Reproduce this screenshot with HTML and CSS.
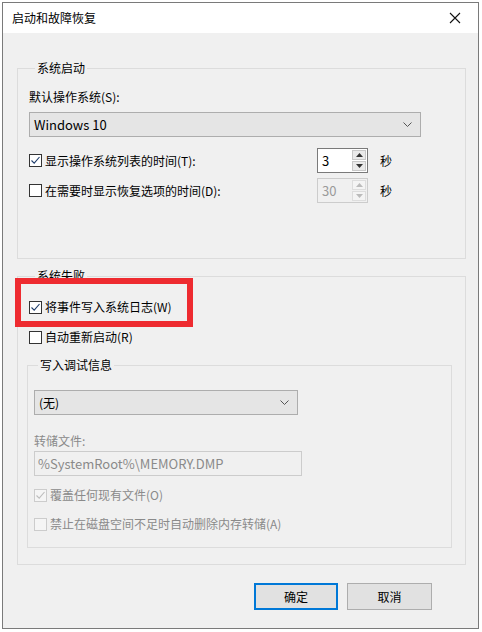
FILE: index.html
```html
<!DOCTYPE html>
<html lang="zh-CN">
<head>
<meta charset="utf-8">
<link rel="stylesheet" href="styles.css">
</head>
<body>
<div class="window">
  <div class="titlebar">
    <span class="title">启动和故障恢复</span>
    <svg class="close" width="12" height="12" viewBox="0 0 12 12"><path d="M1 1 L11 11 M11 1 L1 11" stroke="#111" stroke-width="1.1" fill="none"/></svg>
  </div>
  <div class="content">
    <fieldset class="group g1">
      <legend>系统启动</legend>
      <div class="label">默认操作系统(S):</div>
      <div class="select wide"><span>Windows 10</span>
        <svg width="9" height="5" viewBox="0 0 9 5"><path d="M0.5 0.5 L4.5 4.5 L8.5 0.5" stroke="#555" fill="none"/></svg>
      </div>
      <div class="srow r1">
        <div class="check"><span class="box"><svg width="11" height="11" viewBox="0 0 11 11"><path d="M1.5 5.5 L4.2 8.2 L9.5 2" stroke="#1f3d6b" stroke-width="1.1" fill="none"/></svg></span>显示操作系统列表的时间(T):</div>
        <div class="spin"><span class="val">3</span><span class="btns"><span class="sb"><svg width="7" height="4" viewBox="0 0 7 4"><path d="M0 4 L3.5 0 L7 4Z" fill="#333"/></svg></span><span class="sb"><svg width="7" height="4" viewBox="0 0 7 4"><path d="M0 0 L3.5 4 L7 0Z" fill="#333"/></svg></span></span></div>
        <span class="unit">秒</span>
      </div>
      <div class="srow r2">
        <div class="check"><span class="box"></span>在需要时显示恢复选项的时间(D):</div>
        <div class="spin dis"><span class="val">30</span><span class="btns"><span class="sb"><svg width="7" height="4" viewBox="0 0 7 4"><path d="M0 4 L3.5 0 L7 4Z" fill="#bbb"/></svg></span><span class="sb"><svg width="7" height="4" viewBox="0 0 7 4"><path d="M0 0 L3.5 4 L7 0Z" fill="#bbb"/></svg></span></span></div>
        <span class="unit">秒</span>
      </div>
    </fieldset>

    <fieldset class="group g2">
      <legend>系统失败</legend>
      <div class="check crow c1"><span class="box"><svg width="11" height="11" viewBox="0 0 11 11"><path d="M1.5 5.5 L4.2 8.2 L9.5 2" stroke="#1f3d6b" stroke-width="1.1" fill="none"/></svg></span>将事件写入系统日志(W)</div>
      <div class="check crow c2"><span class="box"></span>自动重新启动(R)</div>
      <fieldset class="group g3">
        <legend>写入调试信息</legend>
        <div class="select narrow"><span>(无)</span>
          <svg width="9" height="5" viewBox="0 0 9 5"><path d="M0.5 0.5 L4.5 4.5 L8.5 0.5" stroke="#555" fill="none"/></svg>
        </div>
        <div class="label dim dumplabel">转储文件:</div>
        <div class="textbox">%SystemRoot%\MEMORY.DMP</div>
        <div class="check crow dis c3"><span class="box"><svg width="11" height="11" viewBox="0 0 11 11"><path d="M1.5 5.5 L4.2 8.2 L9.5 2" stroke="#bdbdbd" stroke-width="1.1" fill="none"/></svg></span>覆盖任何现有文件(O)</div>
        <div class="check crow dis c4"><span class="box"></span>禁止在磁盘空间不足时自动删除内存转储(A)</div>
      </fieldset>
    </fieldset>

    <div class="buttons">
      <span class="btn default">确定</span>
      <span class="btn">取消</span>
    </div>
  </div>
  <div class="highlight"></div>
</div>
</body>
</html>
```

FILE: styles.css
```css
* { box-sizing: border-box; }
html, body { margin: 0; padding: 0; background: #ffffff; }
body {
  padding: 2px 0 0 2px;
  font-family: "Noto Sans CJK SC", "Noto Sans", sans-serif;
  font-size: 12px;
  color: #000;
}
.window {
  position: relative;
  width: 477px;
  height: 627px;
  border: 1px solid #7a7a7a;
  background: #f0f0f0;
  display: flex;
  flex-direction: column;
}
.titlebar {
  height: 30px;
  background: #fff;
  display: flex;
  align-items: center;
  justify-content: space-between;
  padding: 0 17px 0 9px;
  flex: none;
}
.title { font-size: 12px; line-height: 16px; }
.close { display: block; }
.content {
  padding: 27px 12px 0 14px;
  display: flex;
  flex-direction: column;
}
.group {
  margin: 0;
  border: 1px solid #dcdcdc;
  min-width: 0;
}
.group legend {
  padding: 0 2px;
  margin-left: 6px;
  line-height: 16px;
  font-size: 12px;
}
.g1 { padding: 13px 0 54px 11px; height: 199px; }
.g2 { margin-top: 9px; padding: 13px 0 16px 11px; }
.g3 { margin: 10px 13px 0 -2px; padding: 17px 0 13px 6px; }
.g3 legend { margin-left: 4px; }
.label { line-height: 16px; }
.dim { color: #8a8a8a; }
.select {
  margin-top: 7px;
  height: 25px;
  background: #e5e5e5;
  border: 1px solid #adadad;
  display: flex;
  align-items: center;
  justify-content: space-between;
  padding: 0 8px 0 4px;
  font-size: 13px;
}
.select svg { display: block; }
.wide { width: 392px; }
.narrow { width: 264px; margin-top: 0; font-size: 12px; }
.srow {
  display: grid;
  grid-template-columns: 276px 51px auto;
  column-gap: 12px;
  align-items: center;
  height: 25px;
}
.r1 { margin-top: 11px; }
.r2 { margin-top: 5px; }
.check {
  display: flex;
  align-items: center;
  gap: 3px;
  line-height: 16px;
  height: 20px;
}
.box {
  width: 13px;
  height: 13px;
  border: 1px solid #333;
  background: #fff;
  display: flex;
  align-items: center;
  justify-content: center;
  flex: none;
}
.box svg { display: block; }
.check.dis { color: #8a8a8a; }
.check.dis .box { border-color: #cccccc; background: #f5f5f5; }
.spin {
  height: 25px;
  border: 1px solid #7a7a7a;
  background: #fff;
  display: flex;
  align-items: center;
  padding: 0 1px 0 4px;
  font-size: 13px;
}
.spin .val { flex: 1; }
.btns {
  display: flex;
  flex-direction: column;
  gap: 1px;
  width: 14px;
}
.sb {
  height: 10px;
  background: #eaeaea;
  border: 1px solid #c8c8c8;
  display: flex;
  align-items: center;
  justify-content: center;
}
.sb svg { display: block; }
.spin.dis { border-color: #cccccc; background: #f0f0f0; color: #9a9a9a; }
.spin.dis .sb { background: #f4f4f4; border-color: #dddddd; }
.unit { line-height: 16px; }
.crow { height: 20px; }
.c2 { margin-top: 10px; }
.dumplabel { margin-top: 18px; }
.textbox {
  margin-top: 2px;
  width: 268px;
  height: 25px;
  border: 1px solid #cccccc;
  background: #f0f0f0;
  color: #8a8a8a;
  font-size: 13px;
  display: flex;
  align-items: center;
  padding-left: 3px;
}
.c3 { margin-top: 9px; }
.c4 { margin-top: 9px; }
.buttons {
  margin-top: 18px;
  display: flex;
  justify-content: flex-end;
  gap: 9px;
  padding-right: 34px;
}
.btn {
  width: 85px;
  height: 27px;
  background: #e1e1e1;
  border: 1px solid #adadad;
  display: flex;
  align-items: center;
  justify-content: center;
  font-size: 12px;
}
.btn.default { width: 84px; border: 2px solid #0078d7; }
.highlight {
  position: absolute;
  left: 12px;
  top: 275px;
  width: 178px;
  height: 49px;
  border: 6px solid #ee2b30;
}
```
